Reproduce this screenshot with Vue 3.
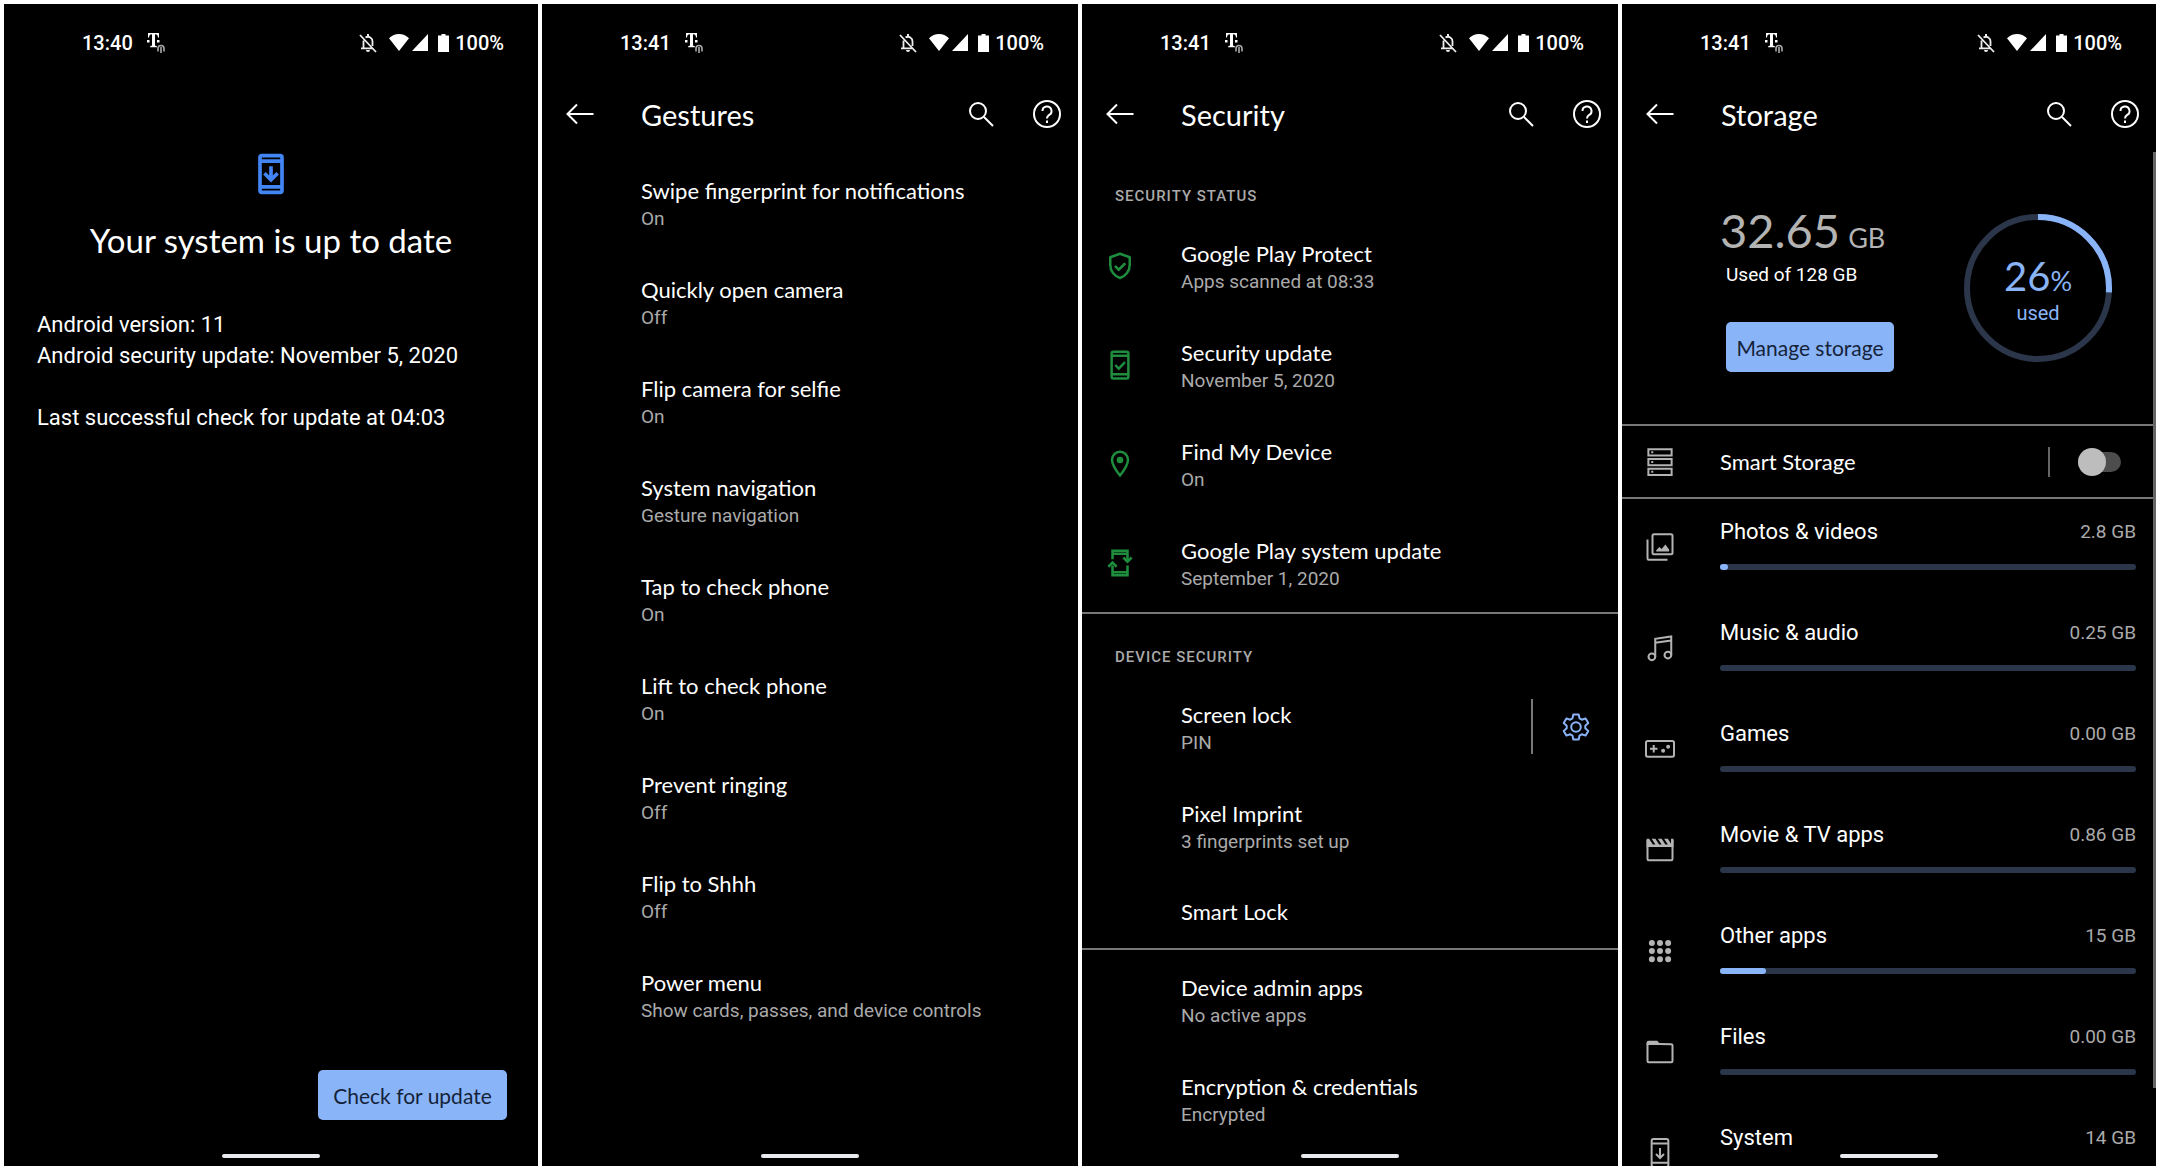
<script setup>
import { ref } from 'vue';

const smartStorage = ref(false);

const icons = {
  update: '<path fill="currentColor" fill-rule="evenodd" d="M17 1H7a2 2 0 0 0-2 2v18a2 2 0 0 0 2 2h10a2 2 0 0 0 2-2V3a2 2 0 0 0-2-2zM7 3h10v1H7zm10 15H7V6h10zM7 20h10v1H7z"/><path fill="none" stroke="currentColor" stroke-width="2" d="M12 7.8v7M8.4 11.6l3.6 3.6 3.6-3.6"/>',
  shield: '<g fill="none" stroke="currentColor" stroke-width="2"><path stroke-linejoin="round" d="M12 2.2 4.2 5v6c0 5 3.3 9.1 7.8 10.6 4.5-1.5 7.8-5.6 7.8-10.6V5z"/><path d="m8 12 3 3 5.2-5.2"/></g>',
  phoneCheck: '<g fill="none" stroke="currentColor" stroke-width="2"><rect x="5.3" y="1.3" width="13.4" height="21.4" rx="1.4"/><path d="M5 4.6h14M5 19.4h14M8.2 12l2.8 2.9 5-5.2"/></g>',
  pin: '<path fill="none" stroke="currentColor" stroke-width="2" d="M12 2.2a6.4 6.4 0 0 0-6.4 6.4c0 4.6 6.4 12.6 6.4 12.6s6.4-8 6.4-12.6A6.4 6.4 0 0 0 12 2.2z"/><circle cx="12" cy="8.8" r="2.6" fill="currentColor"/>',
  phoneSync: '<g fill="none" stroke="currentColor" stroke-width="2"><path d="M6 9V2.2h12v8M6 14v7.8h12V14M6 4.6h12M6 19.4h12"/><path d="m2.7 15 3.3-3.3L9.3 15M14.7 7.6l3.3 3.3 3.3-3.3"/></g>',
  storage: '<g fill="none" stroke="currentColor" stroke-width="1.6"><path d="M2.7 1.7h18.6v5H2.7zM2.7 9.5h18.6v5H2.7zM2.7 17.3h18.6v5H2.7z"/><path d="M5.8 3.4v1.6M5.8 11.2v1.6M5.8 19v1.6"/></g>',
  photos: '<g fill="none" stroke="currentColor" stroke-width="1.6"><rect x="6" y="1.8" width="16" height="16" rx="1.2"/><path d="M2 6v15.2a1 1 0 0 0 1 1h15"/></g><path fill="currentColor" d="M9 15.5v-1l2.5-2.5 1.8 1.5 3-3.5 3 4v1.5z"/>',
  music: '<g fill="none" stroke="currentColor" stroke-width="1.6"><circle cx="5.5" cy="19" r="2.7"/><circle cx="18.3" cy="17.6" r="2.7"/><path d="M8.2 19V4.6L21 2.8v14.8M8.2 7.8 21 6"/></g>',
  games: '<g fill="none" stroke="currentColor" stroke-width="1.6"><rect x=".8" y="5.5" width="22.4" height="12.6" rx="1.4"/><path d="M4 11.8h6M7 8.8v6"/></g><g fill="currentColor"><circle cx="14.5" cy="13.4" r="1.6"/><circle cx="18.5" cy="10.2" r="1.6"/></g>',
  movie: '<path fill="none" stroke="currentColor" stroke-width="1.6" d="M2 4v15.2a1 1 0 0 0 1 1h18a1 1 0 0 0 1-1V4"/><path fill="currentColor" d="M1.3 3h2l3 4.5h2L5.3 3h3l3 4.5h2L10.3 3h3l3 4.5h2L15.3 3h3l2.5 4V3h2v6.5H1.3z"/>',
  apps: '<path fill="none" stroke="currentColor" stroke-width="4.8" stroke-linecap="round" d="M5.5 5.5h0M12 5.5h0M18.5 5.5h0M5.5 12h0M12 12h0M18.5 12h0M5.5 18.5h0M12 18.5h0M18.5 18.5h0"/>',
  folder: '<path fill="none" stroke="currentColor" stroke-width="1.6" d="M2 5.5v13.7a1 1 0 0 0 1 1h18a1 1 0 0 0 1-1V6.7a1 1 0 0 0-1-1z"/><path fill="currentColor" d="M1.3 6V4.5A1.5 1.5 0 0 1 2.8 3h7L12 5.5V6z"/>',
  system: '<g fill="none" stroke="currentColor" stroke-width="1.6"><rect x="5.3" y=".8" width="13.4" height="22.4" rx="1.6"/><path d="M5.3 4.3h13.4M5.3 19.7h13.4M12 8v8M8.8 12.8l3.2 3.2 3.2-3.2"/></g>'
};

const gestures = [
  { title: 'Swipe fingerprint for notifications', summary: 'On' },
  { title: 'Quickly open camera', summary: 'Off' },
  { title: 'Flip camera for selfie', summary: 'On' },
  { title: 'System navigation', summary: 'Gesture navigation' },
  { title: 'Tap to check phone', summary: 'On' },
  { title: 'Lift to check phone', summary: 'On' },
  { title: 'Prevent ringing', summary: 'Off' },
  { title: 'Flip to Shhh', summary: 'Off' },
  { title: 'Power menu', summary: 'Show cards, passes, and device controls' }
];

const security = [
  {
    header: 'Security status',
    items: [
      { title: 'Google Play Protect', summary: 'Apps scanned at 08:33', icon: 'shield' },
      { title: 'Security update', summary: 'November 5, 2020', icon: 'phoneCheck' },
      { title: 'Find My Device', summary: 'On', icon: 'pin' },
      { title: 'Google Play system update', summary: 'September 1, 2020', icon: 'phoneSync' }
    ]
  },
  {
    header: 'Device security',
    items: [
      { title: 'Screen lock', summary: 'PIN', settings: true },
      { title: 'Pixel Imprint', summary: '3 fingerprints set up' },
      { title: 'Smart Lock' }
    ]
  },
  {
    items: [
      { title: 'Device admin apps', summary: 'No active apps' },
      { title: 'Encryption & credentials', summary: 'Encrypted' }
    ]
  }
];

const storage = [
  { name: 'Photos & videos', size: '2.8 GB', percent: 2, icon: 'photos' },
  { name: 'Music & audio', size: '0.25 GB', percent: 0, icon: 'music' },
  { name: 'Games', size: '0.00 GB', percent: 0, icon: 'games' },
  { name: 'Movie & TV apps', size: '0.86 GB', percent: 0, icon: 'movie' },
  { name: 'Other apps', size: '15 GB', percent: 11, icon: 'apps' },
  { name: 'Files', size: '0.00 GB', percent: 0, icon: 'folder' },
  { name: 'System', size: '14 GB', percent: 11, icon: 'system' }
];

const screens = [
  { id: 'update', time: '13:40' },
  { id: 'gestures', time: '13:41', title: 'Gestures' },
  { id: 'security', time: '13:41', title: 'Security' },
  { id: 'storage', time: '13:41', title: 'Storage' }
];
</script>

<template>
  <main class="screens">
    <section v-for="screen in screens" :key="screen.id" class="screen" :class="screen.id">
      <div class="status">
        <span>{{ screen.time }}</span>
        <svg class="carrier" viewBox="0 0 18 20" aria-hidden="true">
          <path fill="#fff" d="M1 0h11v4.500h-1C10.800 2.300 10 1.300 8 1.200v10.300c0 1.300.5 1.700 2 1.800v1H3v-1c1.500-.1 2-.5 2-1.800V1.200C3 1.300 2.200 2.300 2 4.500H1zM0 7h2.500v2.500H0zM10 7h2.500v2.500H10z"/>
          <path fill="none" stroke="#aaa" stroke-width="1.600" d="M11 18.500v-3a3 3 0 0 1 6 0v3M14 20v-6"/>
        </svg>
        <div class="indicators">
          <svg class="bell" viewBox="0 0 18 20" aria-hidden="true">
            <path fill="none" stroke="#eee" stroke-width="1.800" d="M1 2 17 19M4.500 7.500V15M2 15.400h12M6.500 4.500C10 2.500 13.500 5 13.500 8.500v4.500"/>
            <path fill="#eee" d="M8 1h2v3H8zM7 17h4a2 2 0 0 1-4 0z"/>
          </svg>
          <svg class="wifi" viewBox="0 0 20 17" aria-hidden="true">
            <path fill="#fff" d="M10 17 0 4.300C2.800 1.500 6.200 0 10 0s7.200 1.500 10 4.300z"/>
          </svg>
          <svg class="signal" viewBox="0 0 16 17" aria-hidden="true">
            <path fill="#fff" d="M16 0v17H0z"/>
          </svg>
          <svg class="battery" viewBox="0 0 11 18" aria-hidden="true">
            <path fill="#fff" d="M3.500 0h4v1.500H11V18H0V1.500h3.500z"/>
          </svg>
          <span>100%</span>
        </div>
      </div>

      <header v-if="screen.title" class="toolbar">
        <button type="button" class="icon-button" aria-label="Back">
          <svg viewBox="0 0 28 28"><path d="M27.500 14H1.500M11 4.500 1.500 14l9.500 9.500"/></svg>
        </button>
        <h1>{{ screen.title }}</h1>
        <button type="button" class="icon-button" aria-label="Search">
          <svg viewBox="0 0 28 28"><circle cx="11" cy="11" r="8"/><path d="m17 17 9 9"/></svg>
        </button>
        <button type="button" class="icon-button" aria-label="Help">
          <svg viewBox="0 0 28 28">
            <circle cx="14" cy="14" r="13"/>
            <path d="M9.500 11a4.500 4.500 0 1 1 6.700 3.900c-1.500 1-2.200 1.700-2.200 3.600M14 20.500v2.500"/>
          </svg>
        </button>
      </header>

      <template v-if="screen.id === 'update'">
        <div class="update-head">
          <svg viewBox="0 0 24 24" aria-hidden="true" v-html="icons.update"></svg>
          <h1>Your system is up to date</h1>
        </div>
        <p class="update-info">
          Android version: 11<br>
          Android security update: November 5, 2020
        </p>
        <p class="update-info">Last successful check for update at 04:03</p>
        <button type="button" class="primary">Check for update</button>
      </template>

      <ul v-else-if="screen.id === 'gestures'" class="list">
        <li v-for="item in gestures" :key="item.title" class="row">
          <div class="text">
            <p class="title">{{ item.title }}</p>
            <p class="summary">{{ item.summary }}</p>
          </div>
        </li>
      </ul>

      <template v-else-if="screen.id === 'security'">
        <div v-for="(group, i) in security" :key="i" class="group">
          <h2 v-if="group.header">{{ group.header }}</h2>
          <ul class="list">
            <li v-for="item in group.items" :key="item.title" class="row" :class="{ single: !item.summary }">
              <svg v-if="item.icon" class="row-icon" viewBox="0 0 24 24" aria-hidden="true" v-html="icons[item.icon]"></svg>
              <div class="text">
                <p class="title">{{ item.title }}</p>
                <p v-if="item.summary" class="summary">{{ item.summary }}</p>
              </div>
              <button v-if="item.settings" type="button" class="gear" aria-label="Screen lock settings">
                <svg viewBox="0 0 28 28">
                  <path d="M11.300 1.500h5.400l.8 3.900 2.300 1.300 3.800-1.300 2.700 4.700-3 2.600v2.600l3 2.600-2.700 4.700-3.800-1.300-2.300 1.300-.8 3.900h-5.400l-.8-3.900-2.300-1.300-3.800 1.300-2.700-4.700 3-2.600v-2.600l-3-2.600 2.700-4.700 3.800 1.300 2.300-1.300z"/>
                  <circle cx="14" cy="14" r="4.800"/>
                </svg>
              </button>
            </li>
          </ul>
        </div>
      </template>

      <template v-else>
        <div class="usage">
          <div class="usage-text">
            <p class="amount">32.65 <small>GB</small></p>
            <p class="total">Used of 128 GB</p>
            <button type="button" class="primary">Manage storage</button>
          </div>
          <div class="donut">
            <svg viewBox="0 0 148 148" aria-hidden="true">
              <circle cx="74" cy="74" r="71"/>
              <circle class="used" cx="74" cy="74" r="71" pathLength="100" stroke-dasharray="26 100"/>
            </svg>
            <div class="donut-label">
              <p>26<small>%</small></p>
              <span>used</span>
            </div>
          </div>
        </div>
        <div class="smart">
          <svg class="row-icon" viewBox="0 0 24 24" aria-hidden="true" v-html="icons.storage"></svg>
          <label for="smart-storage" class="title">Smart Storage</label>
          <div class="switch">
            <input id="smart-storage" v-model="smartStorage" type="checkbox" role="switch">
          </div>
        </div>
        <ul class="list">
          <li v-for="item in storage" :key="item.name" class="category">
            <svg class="row-icon" viewBox="0 0 24 24" aria-hidden="true" v-html="icons[item.icon]"></svg>
            <div class="category-body">
              <div class="category-text">
                <p>{{ item.name }}</p>
                <span>{{ item.size }}</span>
              </div>
              <div class="bar">
                <div v-if="item.percent" class="fill" :style="{ width: item.percent + '%' }"></div>
              </div>
            </div>
          </li>
        </ul>
        <div class="scrollbar"></div>
      </template>

      <div class="nav-handle"></div>
    </section>
  </main>
</template>

<style>
body {
  margin: 0;
  background: #fff;
}
</style>

<style scoped>
.screens {
  display: grid;
  grid-template-columns: 534fr 536fr 536fr 534fr;
  gap: 4px;
  height: 100vh;
  padding: 4px;
  box-sizing: border-box;
  font-family: Roboto, sans-serif;
  color: #fff;
}

.screen {
  position: relative;
  display: flex;
  flex-direction: column;
  min-width: 0;
  overflow: hidden;
  background: #000;
}

h1,
h2,
p,
ul {
  margin: 0;
  padding: 0;
  font-weight: 400;
}

button {
  border: none;
  padding: 0;
  background: none;
  color: inherit;
  cursor: pointer;
}

svg {
  display: block;
  flex: none;
}

.status {
  display: flex;
  align-items: center;
  flex: none;
  height: 74px;
  padding: 3px 34px 0 78px;
  box-sizing: border-box;
  font-size: 20px;
  font-weight: 500;
}

.carrier {
  width: 18px;
  height: 20px;
  margin-left: 14px;
}

.indicators {
  display: flex;
  align-items: center;
  margin-left: auto;
}

.bell {
  width: 18px;
  height: 20px;
  margin-right: 12px;
}

.wifi {
  width: 20px;
  height: 17px;
  margin-right: 3px;
}

.signal {
  width: 16px;
  height: 17px;
  margin-right: 10px;
}

.battery {
  width: 11px;
  height: 18px;
  margin-right: 6px;
}

.toolbar {
  display: flex;
  align-items: center;
  flex: none;
  height: 72px;
  margin-bottom: 3px;
  padding: 0 17px 0 24px;
}

.toolbar h1 {
  flex: 1;
  margin-left: 47px;
  font-family: Lato, sans-serif;
  font-size: 29px;
}

.icon-button svg {
  width: 28px;
  height: 28px;
  fill: none;
  stroke: #fff;
  stroke-width: 2;
}

.icon-button + .icon-button {
  margin-left: 38px;
}

.update-head {
  display: flex;
  flex-direction: column;
  align-items: center;
  gap: 21px;
  padding-top: 74px;
  margin-bottom: 46px;
}

.update-head svg {
  width: 44px;
  height: 44px;
  color: #4285f4;
}

.update-head h1 {
  font-family: Lato, sans-serif;
  font-size: 33px;
  line-height: 46px;
}

.update-info {
  margin: 0 33px 31px;
  font-size: 22px;
  line-height: 31px;
}

.primary {
  height: 50px;
  border-radius: 5px;
  background: #8ab4f8;
  color: #14233a;
  font-family: Lato, sans-serif;
  font-size: 21px;
}

.update .primary {
  align-self: flex-end;
  width: 189px;
  margin: auto 31px 46px 0;
}

.list {
  list-style: none;
}

.row {
  display: flex;
  align-items: center;
  position: relative;
  height: 99px;
  padding-left: 99px;
}

.row.single {
  height: 73px;
}

.row-icon {
  position: absolute;
  left: 23px;
  width: 30px;
  height: 30px;
}

.row .row-icon {
  color: #1e8e3e;
}

.text {
  flex: 1;
}

.title {
  font-family: Lato, sans-serif;
  font-size: 22px;
  line-height: 32px;
}

.summary {
  font-size: 19px;
  line-height: 24px;
  color: #aaa;
}

.group + .group {
  border-top: 2px solid #777;
}

.group h2 {
  height: 63px;
  padding: 31px 33px 0;
  box-sizing: border-box;
  font-size: 15px;
  font-weight: 500;
  line-height: 24px;
  letter-spacing: 1px;
  text-transform: uppercase;
  color: #aaa;
}

.gear {
  display: flex;
  align-items: center;
  height: 55px;
  padding: 0 28px 0 29px;
  border-left: 2px solid #777;
}

.gear svg {
  width: 28px;
  height: 28px;
  fill: none;
  stroke: #8ab4f8;
  stroke-width: 2;
  stroke-linejoin: round;
}

.usage {
  display: flex;
  justify-content: space-between;
  flex: none;
  height: 271px;
  padding: 53px 44px 0 98px;
  box-sizing: border-box;
}

.amount {
  display: flex;
  align-items: baseline;
  gap: 8px;
  font-family: Lato, sans-serif;
  font-size: 47px;
  line-height: 48px;
  color: #b3b3b3;
}

.amount small {
  font-size: 27px;
  line-height: 1;
}

.total {
  margin: 6px 6px 32px;
  font-size: 19px;
  line-height: 30px;
}

.usage .primary {
  width: 168px;
  margin-left: 6px;
}

.donut {
  display: grid;
  width: 148px;
  height: 148px;
  margin-top: 8px;
  color: #8ab4f8;
}

.donut > * {
  grid-area: 1 / 1;
}

.donut svg {
  transform: rotate(-90deg);
  fill: none;
  stroke: #2b364a;
  stroke-width: 6;
}

.donut .used {
  stroke: #8ab4f8;
}

.donut-label {
  padding-top: 39px;
  text-align: center;
  font-size: 20px;
  line-height: 28px;
}

.donut-label p {
  display: flex;
  align-items: baseline;
  justify-content: center;
  font-family: Lato, sans-serif;
  font-size: 40px;
  line-height: 46px;
}

.donut-label small {
  font-size: 27px;
  line-height: 1;
}

.smart {
  display: flex;
  align-items: center;
  flex: none;
  position: relative;
  height: 75px;
  padding: 0 35px 0 98px;
  box-sizing: border-box;
  border: solid #777;
  border-width: 2px 0;
}

.smart .title {
  flex: 1;
}

.smart .row-icon,
.category .row-icon {
  color: #b3b3b3;
}

.switch {
  display: flex;
  align-items: center;
  height: 30px;
  padding-left: 28px;
  border-left: 2px solid #666;
}

.switch input {
  display: flex;
  align-items: center;
  appearance: none;
  width: 43px;
  height: 20px;
  margin: 0;
  border-radius: 10px;
  background: #4d4d4d;
}

.switch input::before {
  content: '';
  width: 28px;
  height: 28px;
  border-radius: 50%;
  background: #bdbdbd;
}

.switch input:checked::before {
  margin-left: auto;
  background: #8ab4f8;
}

.category {
  display: flex;
  position: relative;
  height: 101px;
  padding: 18px 20px 0 98px;
  box-sizing: border-box;
}

.category .row-icon {
  top: 33px;
}

.category-body {
  flex: 1;
}

.category-text {
  display: flex;
  justify-content: space-between;
  margin-bottom: 17px;
  font-size: 22px;
  line-height: 30px;
}

.category-text span {
  font-size: 19px;
  color: #aaa;
}

.bar {
  height: 6px;
  border-radius: 3px;
  background: #2b364a;
}

.fill {
  height: 6px;
  border-radius: 3px;
  background: #8ab4f8;
}

.scrollbar {
  position: absolute;
  top: 148px;
  right: 0;
  bottom: 78px;
  width: 3px;
  background: #666;
}

.nav-handle {
  position: absolute;
  bottom: 8px;
  left: 50%;
  width: 98px;
  height: 4px;
  margin-left: -49px;
  border-radius: 2px;
  background: #e8eaed;
}
</style>
